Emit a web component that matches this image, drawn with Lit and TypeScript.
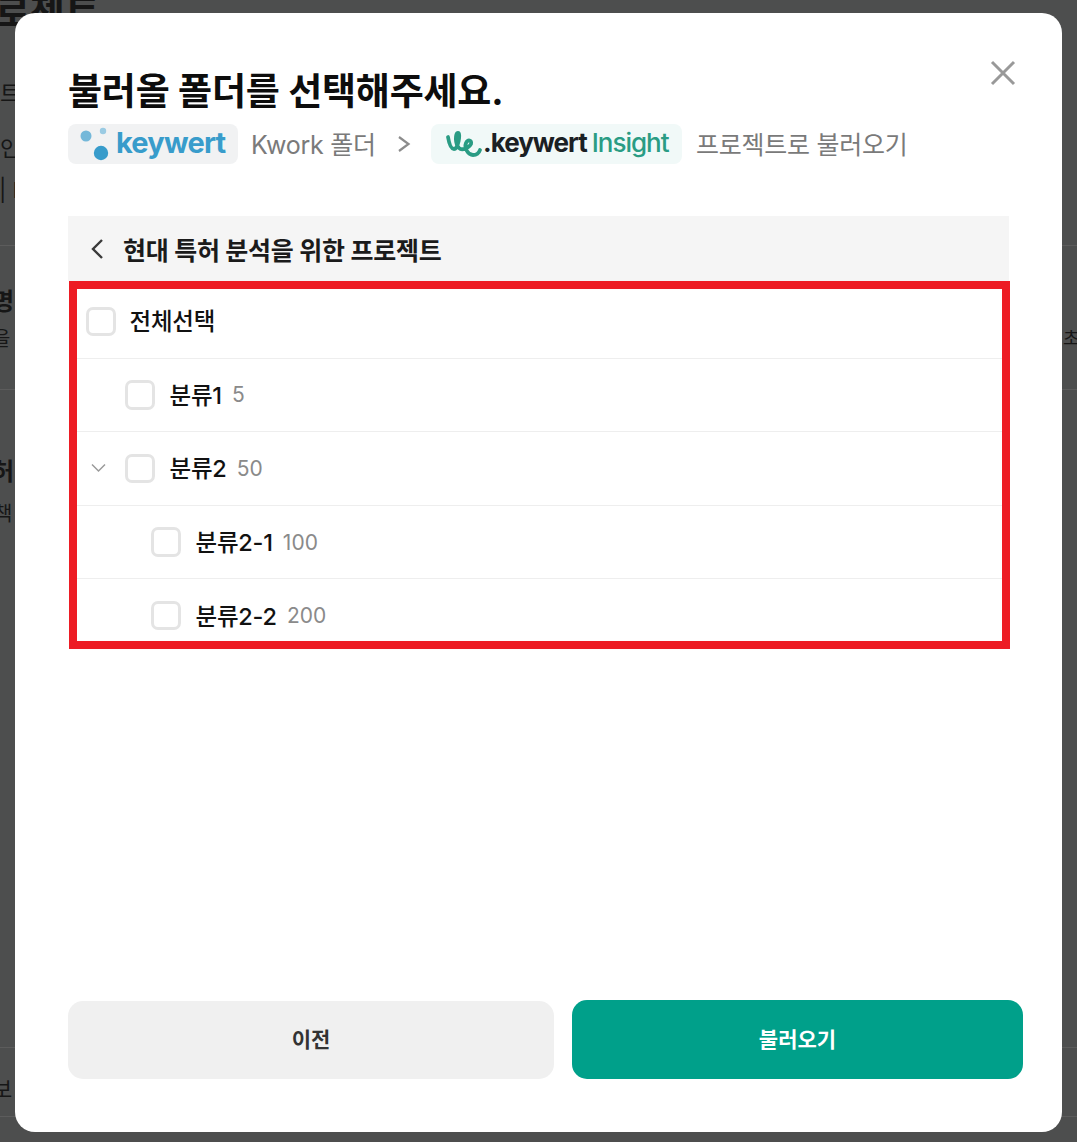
import { LitElement, html, css, svg } from "lit";
import { customElement } from "lit/decorators.js";

const rows = [
  { label: "분류1", count: "5", indent: 48, caret: false },
  { label: "분류2", count: "50", indent: 48, caret: true },
  { label: "분류2-1", count: "100", indent: 74, caret: false },
  { label: "분류2-2", count: "200", indent: 74, caret: false },
];

const frags = [
  { t: "로젝트", x: -5, y: -10, s: 38, w: 700 },
  { t: "트", x: 0, y: 80, s: 22, w: 400 },
  { t: "인", x: 0, y: 135, s: 22, w: 400 },
  { t: "| I", x: -1, y: 177, s: 22, w: 400 },
  { t: "명", x: -8, y: 288, s: 24, w: 700 },
  { t: "을", x: -8, y: 327, s: 20, w: 400 },
  { t: "허", x: -8, y: 458, s: 24, w: 700 },
  { t: "책", x: -6, y: 502, s: 20, w: 400 },
  { t: "초", x: 1063, y: 328, s: 18, w: 400 },
  { t: "보", x: -8, y: 1076, s: 22, w: 400 },
];
const lines = [245, 389, 1047, 1116];

@customElement("app-root")
export class AppRoot extends LitElement {
  static styles = css`
    :host {
      display: block;
      font-family: Inter, "Noto Sans CJK KR", sans-serif;
    }
    .page {
      position: relative;
      width: 1077px;
      height: 1142px;
      overflow: hidden;
      background: #4d4e4e;
      padding: 13px 16px 10px 15px;
      box-sizing: border-box;
      display: flex;
    }
    .frag {
      position: absolute;
      color: #161616;
      line-height: 1.2;
      white-space: nowrap;
    }
    .bgline {
      position: absolute;
      left: 0;
      right: 0;
      height: 1px;
      background: #5c5c5c;
    }
    .modal {
      position: relative;
      flex: 1;
      background: #fff;
      border-radius: 20px;
      padding: 55px 39px 53px 53px;
      display: flex;
      flex-direction: column;
    }
    .close {
      position: absolute;
      right: 46px;
      top: 47px;
      width: 26px;
      height: 26px;
      display: block;
    }
    h1 {
      margin: 0;
      font-size: 37px;
      line-height: 48px;
      font-weight: 700;
      color: #0d0d0d;
      letter-spacing: -0.2px;
    }
    .crumbs {
      display: flex;
      align-items: center;
      height: 40px;
      margin-top: 8px;
      font-size: 25px;
      color: #7a7a7a;
      letter-spacing: -0.25px;
    }
    .crumbs > span,
    .logo span {
      padding-bottom: 3px;
    }
    .logo {
      display: flex;
      align-items: center;
      height: 40px;
      box-sizing: border-box;
      border-radius: 8px;
      font-weight: 700;
    }
    .logo-a {
      width: 170px;
      background: #f1f2f3;
      padding-left: 11px;
      color: #389ccb;
      font-size: 29px;
      letter-spacing: -0.8px;
      gap: 2px;
    }
    .logo-b {
      width: 251px;
      background: #f1f9f8;
      padding-left: 14px;
      font-size: 26px;
      letter-spacing: -1px;
      color: #1a2024;
      margin-right: 14px;
    }
    .logo-b .ins {
      color: #2a9c84;
      font-weight: 500;
      margin-left: 5px;
    }
    .logo svg {
      display: block;
      flex: none;
    }
    .folder {
      margin-left: 13px;
      width: 124px;
      white-space: nowrap;
    }
    .gt {
      display: block;
      margin-left: 22px;
      margin-right: 20px;
      flex: none;
    }
    .head {
      margin-top: 52px;
      width: 941px;
      height: 65px;
      background: #f5f5f5;
      display: flex;
      align-items: center;
      gap: 19px;
      padding-left: 23px;
      box-sizing: border-box;
      font-size: 25px;
      font-weight: 700;
      color: #1b1b1b;
      letter-spacing: -0.25px;
    }
    .head svg {
      display: block;
      flex: none;
    }
    .list {
      width: 941px;
      margin-left: 1px;
      height: 368px;
      box-sizing: border-box;
      border: 8px solid #ed1c24;
      overflow: hidden;
    }
    .inner {
      margin-top: -4px;
    }
    .row {
      height: 73.6px;
      box-sizing: border-box;
      display: flex;
      align-items: center;
      border-bottom: 1px solid #eeeeee;
      position: relative;
      font-size: 23.5px;
      font-weight: 500;
      color: #111;
    }
    .box {
      width: 29.5px;
      height: 29.5px;
      box-sizing: border-box;
      border: 3px solid #e4e4e4;
      border-radius: 7px;
      background: #fff;
      flex: none;
    }
    .label {
      margin-left: 15px;
      letter-spacing: -0.2px;
      white-space: nowrap;
      padding-bottom: 2px;
    }
    .all {
      margin-left: 14px;
    }
    .count {
      margin-left: 10px;
      font-size: 21px;
      font-weight: 400;
      color: #8a8a8a;
    }
    .caret {
      position: absolute;
      left: 14px;
      top: 50%;
      margin-top: -5px;
      display: block;
    }
    .spacer {
      flex: 1;
    }
    .actions {
      display: grid;
      grid-template-columns: 486px 451px;
      column-gap: 18px;
      align-items: end;
    }
    .btn {
      border: 0;
      font: inherit;
      font-size: 21px;
      font-weight: 700;
      border-radius: 15px;
      padding: 0 0 4px;
      display: flex;
      align-items: center;
      justify-content: center;
    }
    .prev {
      height: 78px;
      background: #f0f0f0;
      color: #333;
    }
    .load {
      height: 79px;
      background: #00a08a;
      color: #fff;
    }
  `;

  private box(indent: number) {
    return html`<span class="box" style="margin-left:${indent}px"></span>`;
  }

  render() {
    return html`
      <div class="page">
        ${lines.map((y) => html`<div class="bgline" style="top:${y}px"></div>`)}
        ${frags.map(
          (f) => html`<div class="frag" style="left:${f.x}px;top:${f.y}px;font-size:${f.s}px;font-weight:${f.w}">${f.t}</div>`
        )}
        <div class="modal">
          <svg class="close" viewBox="0 0 26 26" fill="none" stroke="#999" stroke-width="3">
            <path d="M2 2 24 24M24 2 2 24" />
          </svg>
          <h1>불러올 폴더를 선택해주세요.</h1>
          <div class="crumbs">
            <div class="logo logo-a">
              <svg width="35" height="36" viewBox="0 0 35 36">
                <circle cx="7" cy="10" r="5.500" fill="#74b8d9" />
                <circle cx="24" cy="5" r="3.200" fill="#9acbe3" />
                <circle cx="22" cy="27" r="7.200" fill="#389ccb" />
              </svg>
              <span>keywert</span>
            </div>
            <span class="folder">Kwork 폴더</span>
            <svg class="gt" width="14" height="18" viewBox="0 0 14 18" fill="none" stroke="#8c8c8c" stroke-width="2.200">
              <path d="M2 2 11.500 9 2 16" />
            </svg>
            <div class="logo logo-b">
              <svg width="38" height="28" viewBox="0 0 38 28" fill="none" stroke="#2a9c84" stroke-width="3.800" stroke-linecap="round">
                <path d="M3 7C4 13 6 19 9 19 13 19 16 3 13 3 10 3 10 14 14 18 17 21 24 18 26 14 27 10 23 9 21 13 19 18 23 25 28 25 31 25 34 23 35 20" />
              </svg>
              <span>.keywert</span><span class="ins">Insight</span>
            </div>
            <span>프로젝트로 불러오기</span>
          </div>
          <div class="head">
            <svg width="13" height="22" viewBox="0 0 13 22" fill="none" stroke="#3a3a3a" stroke-width="2.400">
              <path d="M11 2 2 11 11 20" />
            </svg>
            <span>현대 특허 분석을 위한 프로젝트</span>
          </div>
          <div class="list">
            <div class="inner">
              <div class="row">
                ${this.box(9)}
                <span class="label all">전체선택</span>
              </div>
              ${rows.map(
                (r) => html`
                  <div class="row">
                    ${r.caret
                      ? svg`<svg class="caret" width="15" height="10" viewBox="0 0 15 10" fill="none" stroke="#9a9a9a" stroke-width="1.500"><path d="M1 1.500 7.500 8 14 1.500" /></svg>`
                      : ""}
                    ${this.box(r.indent)}
                    <span class="label">${r.label}</span>
                    <span class="count">${r.count}</span>
                  </div>
                `
              )}
            </div>
          </div>
          <div class="spacer"></div>
          <div class="actions">
            <button class="btn prev">이전</button>
            <button class="btn load">불러오기</button>
          </div>
        </div>
      </div>
    `;
  }
}
